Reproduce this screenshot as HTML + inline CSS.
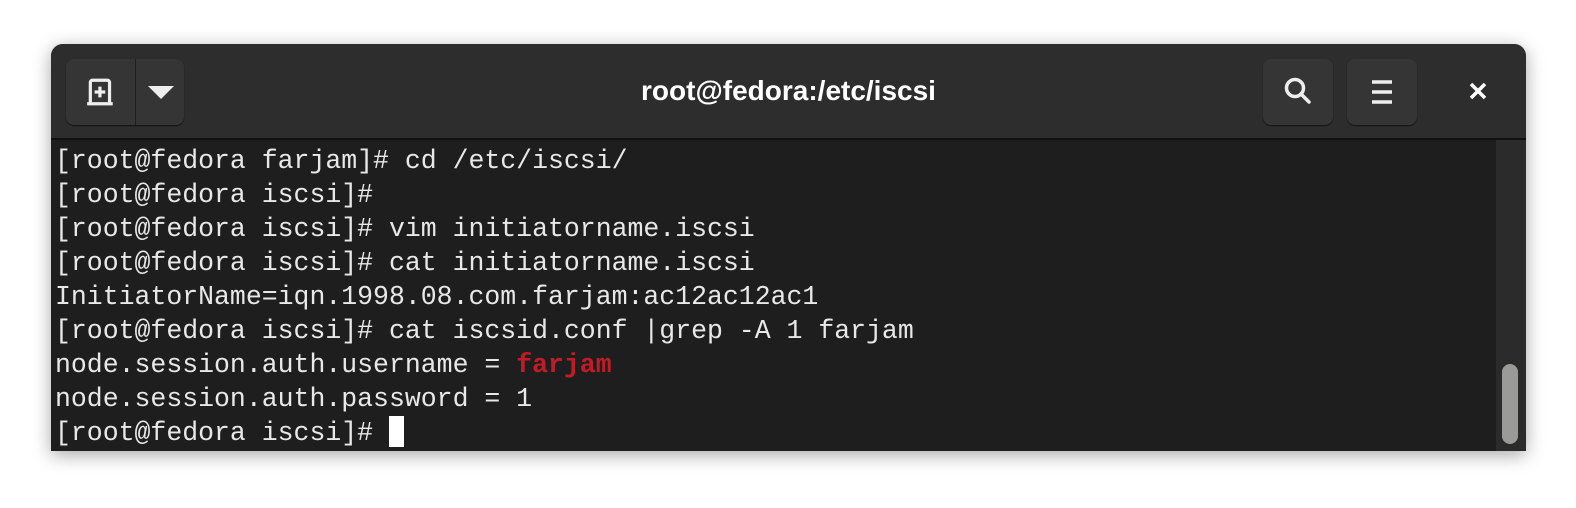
<!DOCTYPE html>
<html><head><style>
html,body{margin:0;padding:0;background:#fff;width:1576px;height:508px;overflow:hidden}
.win{position:absolute;left:51px;top:44px;width:1475px;height:407px;background:#1e1e1e;border-radius:12px 12px 0 0;box-shadow:0 4px 18px rgba(0,0,0,.35);overflow:hidden}
.hdr{position:absolute;left:0;top:0;width:100%;height:94px;background:#2d2d2d;border-bottom:2px solid #111}
.btn{position:absolute;top:15px;height:66px;background:#353535;border-radius:8px;box-shadow:0 1px 1px rgba(0,0,0,.6)}
.title{position:absolute;left:0;width:100%;top:31px;text-align:center;color:#fff;font:bold 28px "Liberation Sans",sans-serif}
.term{position:absolute;left:4px;top:100px;font:26.5px/34px "Liberation Mono",monospace;color:#e8e8e8;white-space:pre}
.sb{position:absolute;left:1445px;top:96px;width:30px;height:311px;background:#2b2b2b}
.thumb{position:absolute;left:6px;top:224px;width:16px;height:80px;background:#9a9a98;border-radius:8px}
.red{color:#c01c28;font-weight:bold}
.cur{display:inline-block;width:15px;height:31px;background:#fff;vertical-align:-7px}
</style></head><body>
<div class="win">
<div class="hdr">
 <div class="btn" style="left:15px;width:118px">
  <div style="position:absolute;left:69px;top:0;width:1px;height:66px;background:#1e1e1e"></div>
  <svg style="position:absolute;left:19px;top:18px" width="32" height="30" viewBox="0 0 30 28"><path d="M5 24V5a2 2 0 0 1 2-2h14a2 2 0 0 1 2 2v19" fill="none" stroke="#eee" stroke-width="3"/><path d="M2 25h24" stroke="#eee" stroke-width="3"/><path d="M14 9v10M9 14h10" stroke="#eee" stroke-width="3"/></svg>
  <svg style="position:absolute;left:82px;top:27px" width="26" height="13"><path d="M0 0h26L13 13z" fill="#eee"/></svg>
 </div>
 <div class="title">root@fedora:/etc/iscsi</div>
 <div class="btn" style="left:1212px;width:70px">
  <svg style="position:absolute;left:20px;top:17px" width="32" height="32"><circle cx="12" cy="12" r="8.5" fill="none" stroke="#eee" stroke-width="3.5"/><path d="M18 18l8 8" stroke="#eee" stroke-width="3.5" stroke-linecap="round"/></svg>
 </div>
 <div class="btn" style="left:1296px;width:70px">
  <svg style="position:absolute;left:25px;top:21px" width="20" height="24"><path d="M0 2h20M0 12h20M0 22h20" stroke="#eee" stroke-width="3.5"/></svg>
 </div>
 <svg style="position:absolute;left:1418px;top:38px" width="18" height="18"><path d="M2 2l14 14M16 2L2 16" stroke="#fff" stroke-width="3.5"/></svg>
</div>
<div class="term">[root@fedora farjam]# cd /etc/iscsi/
[root@fedora iscsi]#
[root@fedora iscsi]# vim initiatorname.iscsi
[root@fedora iscsi]# cat initiatorname.iscsi
InitiatorName=iqn.1998.08.com.farjam:ac12ac12ac1
[root@fedora iscsi]# cat iscsid.conf |grep -A 1 farjam
node.session.auth.username = <span class="red">farjam</span>
node.session.auth.password = 1
[root@fedora iscsi]# <span class="cur"></span></div>
<div class="sb"><div class="thumb"></div></div>
</div>
</body></html>
